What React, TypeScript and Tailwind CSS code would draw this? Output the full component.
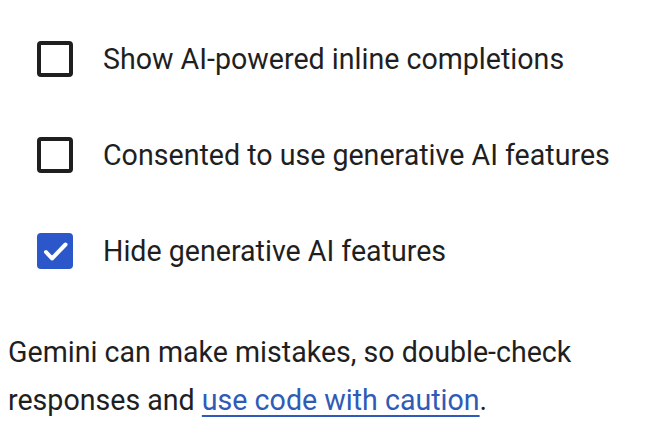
import React, { useState } from 'react';

const options = [
  { id: 'inline', label: 'Show AI-powered inline completions', checked: false },
  { id: 'consent', label: 'Consented to use generative AI features', checked: false },
  { id: 'hide', label: 'Hide generative AI features', checked: true },
];

function Checkbox({ checked, onClick }: { checked: boolean; onClick: () => void }) {
  if (checked) {
    return (
      <button
        onClick={onClick}
        className="h-[36px] w-[36px] shrink-0 rounded-[4px] bg-[#2b57cb]"
      >
        <svg viewBox="0 0 36 36" className="h-[36px] w-[36px]" fill="none">
          <path d="M9 19l6 6.5L28.5 11.5" stroke="white" strokeWidth="4" strokeLinecap="round" strokeLinejoin="round" />
        </svg>
      </button>
    );
  }
  return (
    <button
      onClick={onClick}
      className="h-[36px] w-[36px] shrink-0 rounded-[4px] border-[4px] border-[#1f1f1f] bg-white"
    />
  );
}

export default function App() {
  const [values, setValues] = useState(options.map((o) => o.checked));

  return (
    <div className="h-[448px] w-[656px] bg-white font-['Roboto',sans-serif] text-[#1f1f1f]">
      <div className="flex flex-col pt-[11px]">
        {options.map((o, i) => (
          <div key={o.id} className="flex h-[96px] items-center gap-[30px] pl-[37px]">
            <Checkbox
              checked={values[i]}
              onClick={() => setValues(values.map((v, j) => (j === i ? !v : v)))}
            />
            <span className="text-[28.6px] leading-none">{o.label}</span>
          </div>
        ))}
      </div>
      <p className="mt-[29px] pl-[8px] text-[28.6px] leading-[48px]">
        Gemini can make mistakes, so double-check
        <br />
        responses and{' '}
        <a href="#" className="text-[#2f5bb7] underline decoration-[2px] underline-offset-[5px]">
          use code with caution
        </a>
        .
      </p>
    </div>
  );
}
